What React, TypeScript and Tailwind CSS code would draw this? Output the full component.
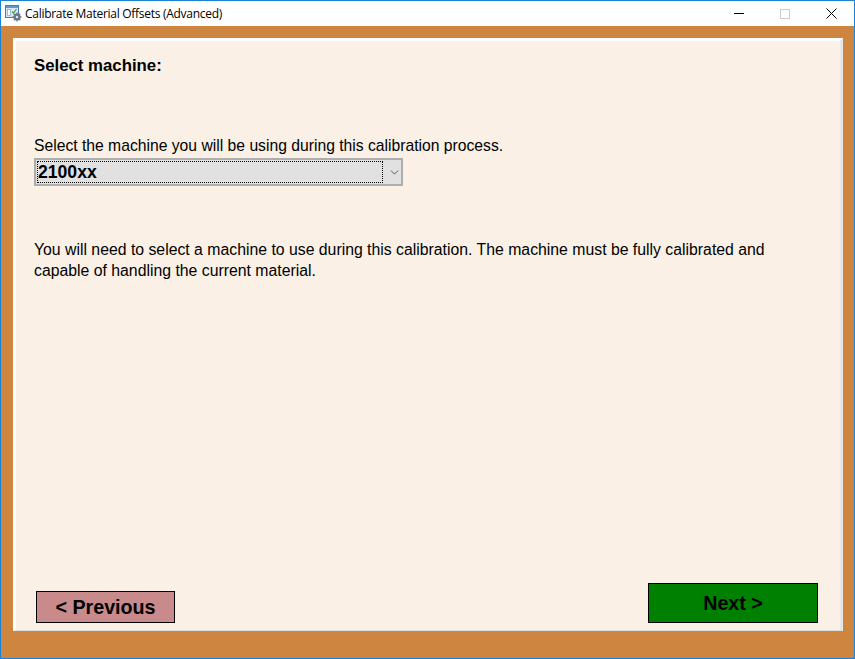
import { ChevronDown } from "lucide-react"

const AppIcon = () => (
    <svg width="17" height="17" viewBox="0 0 17 17" className="shrink-0">
        <rect x="0.5" y="0.5" width="13" height="12" fill="#dbe9f6" stroke="#3f7fb5" />
        <rect x="1" y="1" width="12" height="2" fill="#5b9bd0" />
        <rect x="2.5" y="4.5" width="3" height="6" fill="#ffffff" stroke="#7da7c9" strokeWidth="0.7" />
        <path d="M7 6.5l1.5 1.5 3-4" fill="none" stroke="#3f9a3f" strokeWidth="1.2" />
        <circle cx="12" cy="12" r="3.5" fill="#6b7785" />
        <circle cx="12" cy="12" r="1.2" fill="#e5e9ee" />
        <path d="M12 7.5v1.5M12 15v1.5M7.5 12H9M15 12h1.5M8.8 8.8l1 1M14.2 14.2l1 1M15.2 8.8l-1 1M9.8 14.2l-1 1" stroke="#6b7785" strokeWidth="1.3" />
    </svg>
)

const App = () => {
    return (
        <div className="w-[855px] h-[659px] flex flex-col border border-[#1883d7] bg-[#cd853f] font-['Liberation_Sans',Arial,sans-serif] text-black">
            <div className="h-[25px] shrink-0 bg-white flex items-center pl-[4px]">
                <AppIcon />
                <span className="ml-[3px] text-[12px] font-['Open_Sans',sans-serif] tracking-[-0.28px]">Calibrate Material Offsets (Advanced)</span>
                <div className="ml-auto flex items-center">
                    <div className="w-[46px] flex justify-center">
                        <div className="w-[10px] h-px bg-black"></div>
                    </div>
                    <div className="w-[46px] flex justify-center">
                        <div className="w-[10px] h-[10px] border border-[#cccccc]"></div>
                    </div>
                    <div className="w-[46px] flex justify-center">
                        <svg width="11" height="11" viewBox="0 0 11 11">
                            <path d="M0.5 0.5l10 10M10.5 0.5l-10 10" stroke="#000" strokeWidth="1" />
                        </svg>
                    </div>
                </div>
            </div>

            <div className="flex-1 pt-[12px] pl-[12px] pr-[11px] pb-[27px]">
                <div className="h-full border-t-[3px] border-l-[3px] border-r-[3px] border-b border-t-white border-l-white border-r-[#e6e6e6] border-b-[#dddddd] bg-[#faf0e6] pl-[18px] pr-[22px] flex flex-col">
                    <h2 className="mt-[16px] text-[16.8px] leading-[18px] font-bold">Select machine:</h2>

                    <p className="mt-[62px] text-[15.7px] leading-[18px]">Select the machine you will be using during this calibration process.</p>

                    <div className="mt-[3px] w-[369px] h-[28px] border-2 border-[#adadad] bg-[#e1e1e1] flex items-center pl-[1px]">
                        <div className="w-[346px] h-[22px] border border-dotted border-black flex items-center pt-[2px] text-[17.6px] font-bold leading-none">2100xx</div>
                        <ChevronDown size={13} strokeWidth={1.6} className="ml-[5px] text-[#444444]" />
                    </div>

                    <p className="mt-[53px] text-[15.8px] leading-[21px]">
                        You will need to select a machine to use during this calibration. The machine must be fully calibrated and capable of handling the current material.
                    </p>

                    <div className="mt-auto mb-[7px] flex items-end justify-between pl-[2px]">
                        <button className="w-[139px] h-[32px] border border-black bg-[#c88a8a] pt-[1px] text-[19.7px] font-bold leading-none">&lt; Previous</button>
                        <button className="w-[170px] h-[40px] border border-black bg-[#008000] pt-[2px] text-[19.7px] font-bold leading-none">Next &gt;</button>
                    </div>
                </div>
            </div>
        </div>
    )
}

export default App
